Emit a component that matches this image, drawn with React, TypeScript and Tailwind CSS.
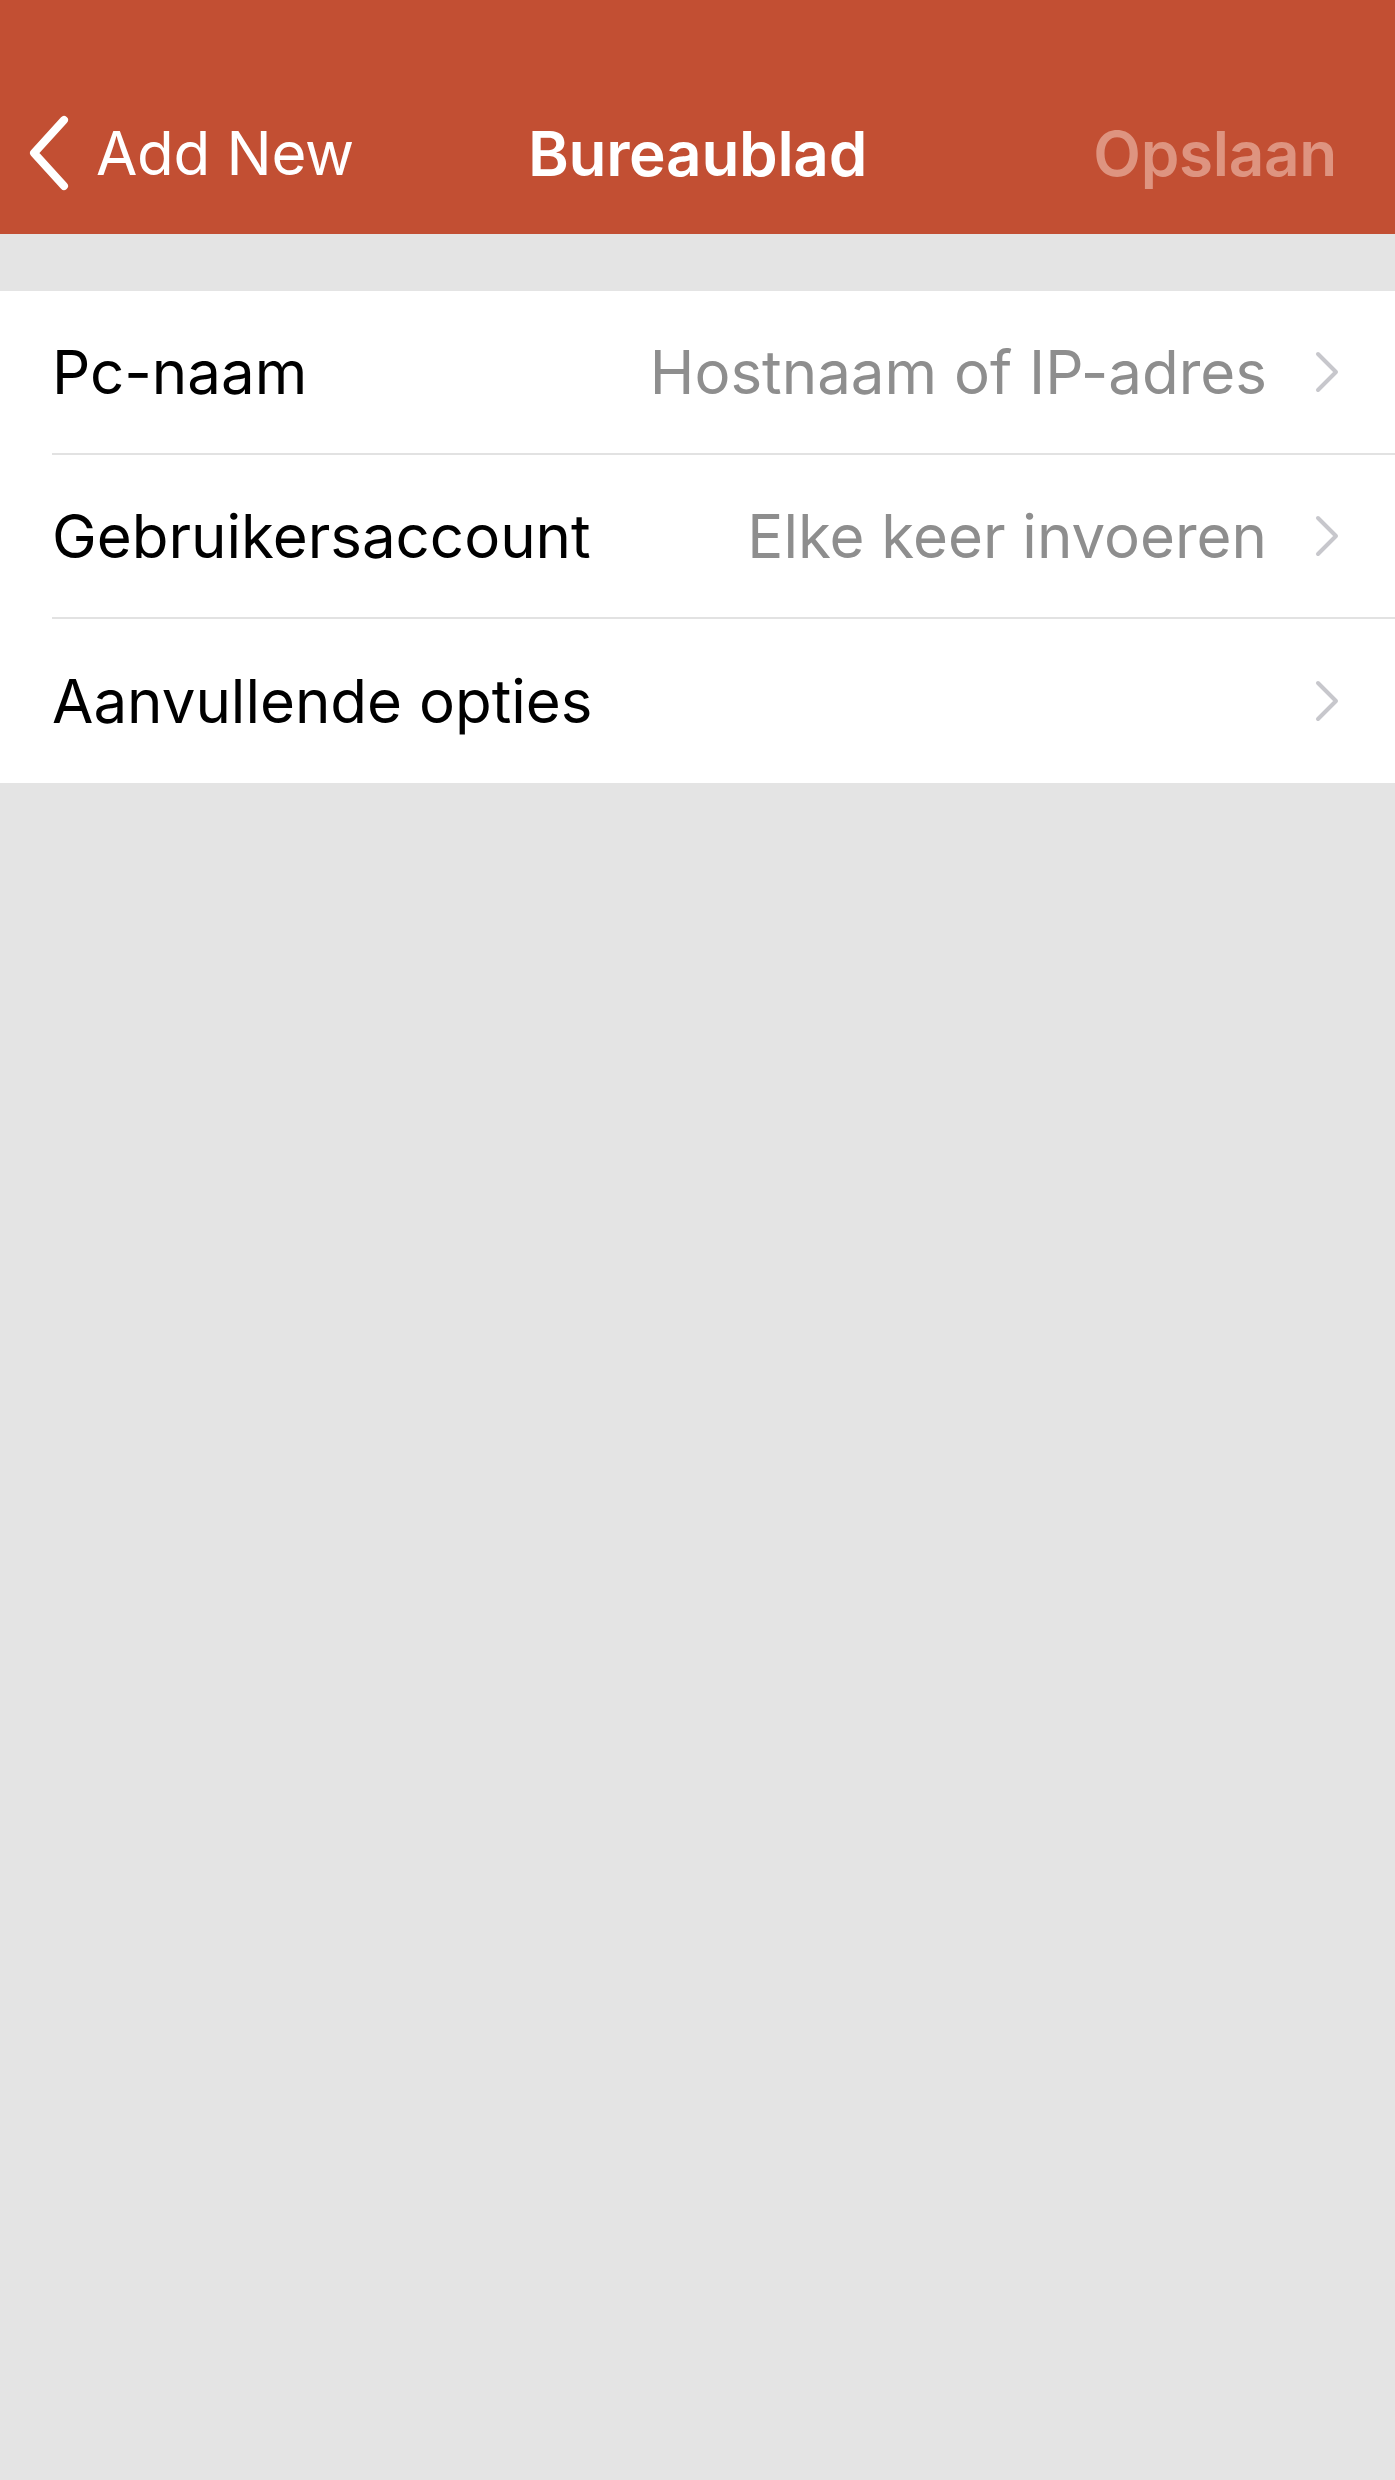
import React from 'react';

const rows = [
  { label: 'Pc-naam', value: 'Hostnaam of IP-adres' },
  { label: 'Gebruikersaccount', value: 'Elke keer invoeren' },
  { label: 'Aanvullende opties', value: '' },
];

const Chevron = () => (
  <svg width="28" height="44" viewBox="0 0 28 44" fill="none" className="shrink-0">
    <path d="M5 4 L23 22 L5 40" stroke="#c7c7cc" strokeWidth="4" strokeLinecap="round" strokeLinejoin="round" />
  </svg>
);

export default function App() {
  return (
    <div className="w-[1395px] h-[2480px] bg-[#e4e4e4] font-['Inter',sans-serif]">
      {/* Nav bar */}
      <div className="h-[234px] bg-[#c24f33] pt-[72px]">
        <div className="relative h-[162px] flex items-center px-[26px]">
          <div className="flex items-center gap-[22px] text-white">
            <svg width="48" height="78" viewBox="0 0 48 78" fill="none">
              <path d="M38 6 L8 39 L38 72" stroke="white" strokeWidth="8" strokeLinecap="round" strokeLinejoin="round" />
            </svg>
            <span className="text-[60px] tracking-[-0.3px]">Add New</span>
          </div>
          <div className="absolute left-0 right-0 text-center text-white text-[62px] font-semibold tracking-[-0.3px] pointer-events-none">
            Bureaublad
          </div>
          <span className="ml-auto mr-[32px] text-[62px] font-semibold text-[#de9480] tracking-[-0.3px]">Opslaan</span>
        </div>
      </div>

      {/* List */}
      <div className="mt-[57px] bg-white">
        {rows.map((r, i) => (
          <div key={r.label} className="pl-[52px]">
            <div
              className={
                'h-[164px] flex items-center pr-[54px] ' +
                (i < rows.length - 1 ? 'border-b-2 border-[#e2e2e2]' : '')
              }
            >
              <span className="text-[60px] text-black">{r.label}</span>
              <span className="ml-auto mr-[46px] text-[60px] text-[#8e8e8e]">{r.value}</span>
              <Chevron />
            </div>
          </div>
        ))}
      </div>
    </div>
  );
}
